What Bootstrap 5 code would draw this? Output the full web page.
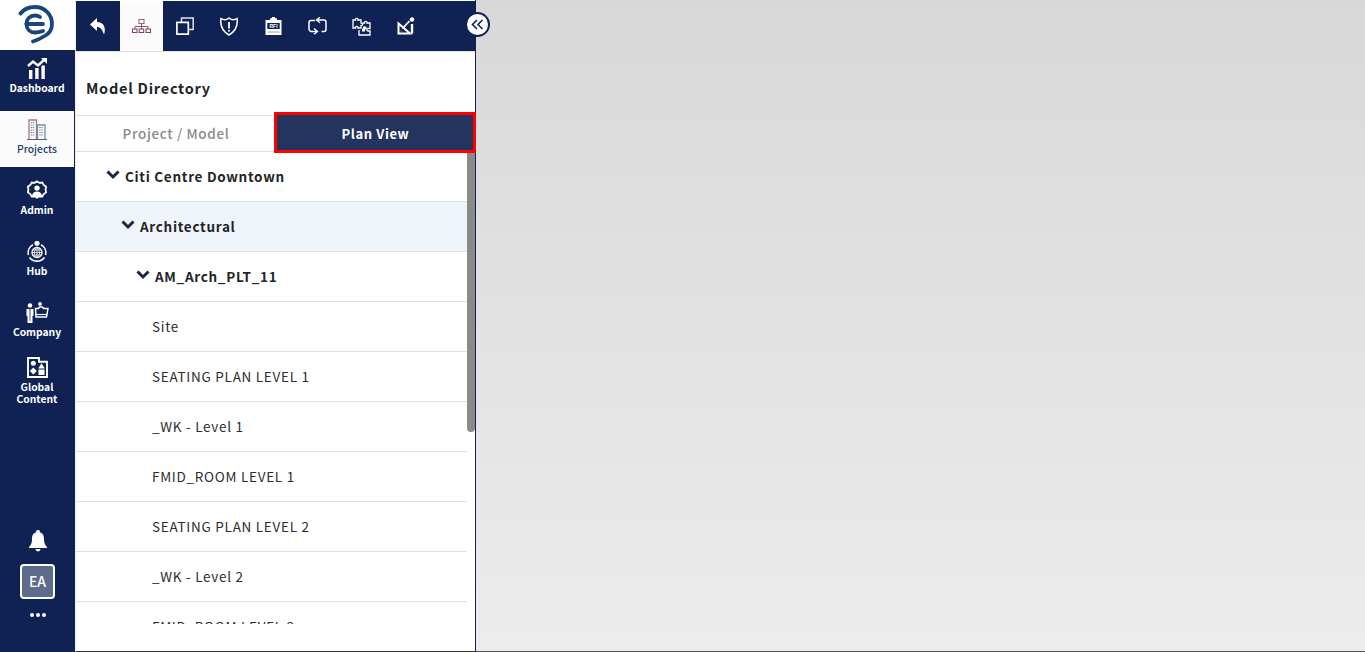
<!DOCTYPE html>
<html lang="en">
<head>
<meta charset="utf-8">
<title>Model Directory</title>
<link href="https://cdn.jsdelivr.net/npm/bootstrap@5.3.0/dist/css/bootstrap.min.css" rel="stylesheet">
<style>
html,body{height:100%;overflow:hidden}
body{font-family:"Noto Sans CJK JP","Noto Sans",sans-serif;color:#212529;background:#fff}
.app-shell{height:652px;width:1365px}
.side-rail{width:75px;background:#0f2253;flex:none}
.logo-box{height:50px;width:75px;background:#fff}
.logo-box svg{margin-right:2px}
.rail-item{display:block;width:74px;color:#fff;font-size:10.3px;font-weight:700;line-height:12px;text-align:center;height:61px;padding-top:8px}
.rail-item svg{display:block;margin:0 auto 3px}
.rail-item.active{background:#fbfbfb;color:#253a6e;font-weight:500;height:56px;margin-bottom:5px}
.rail-tall{height:auto;padding-top:2px}
.bell-wrap{height:24px;margin-bottom:11px}
.avatar{width:35px;height:35px;border:2px solid #fff;border-radius:4px;background:#5d6b8c;color:#fff;font-size:14px;font-weight:500}
.dots{height:16px;gap:2px;margin:8px 0 29px}
.dots i{display:block;width:4px;height:4px;border-radius:50%;background:#fff}
.panel{width:401px;flex:none;border-left:1px solid #f1f1f1;border-right:1px solid #0f2253;border-bottom:1px solid #333;background:#fff}
.tool-bar{height:50px;background:#0f2253;margin-top:1px;flex:none}
.tool-btn{width:44.2px;height:50px;color:#fff;flex:none}
.tool-btn.first{width:44px}
.tool-btn.on{background:#fbfbfb;width:43px}
.panel-title{height:64px;font-size:14.5px;font-weight:700;padding-left:10px;padding-top:8px;letter-spacing:.75px;color:#212529;border-top:1px solid #e0e0e0;flex:none}
.tab-row{height:37px;flex:none;border-top:1px solid #e0e0e0;border-bottom:1px solid #e0e0e0}
.tab-off{width:198px;padding-left:2px;color:#8a8a8a;font-size:13.5px;font-weight:500;letter-spacing:.65px;flex:none}
.tab-on{width:202px;height:41px;margin-top:-4px;background:#23345f;border:3px solid #f00;color:#fff;font-size:13px;font-weight:700;letter-spacing:.6px;padding:2px 0 0 1px;position:relative;z-index:1;flex:none}
.tree-wrap{height:473px;overflow:hidden}
.tree-list{width:391px;height:472px;overflow:hidden}
.tree-row{height:50px;border-bottom:1px solid #e0e0e0;font-size:13.5px;color:#2b2b33;flex:none;letter-spacing:.72px}
.tree-row.bold{font-weight:700;color:#212529;letter-spacing:.7px}
.tree-row.hl{background:#f0f4fb}
.lv0{padding-left:30px}.lv1{padding-left:45px}.lv2{padding-left:60px}.leaf{padding-left:76px}
.chev{margin-right:5px;margin-top:-3px;flex:none}
.scroll-thumb{position:absolute;right:0;top:0;width:8px;height:280px;background:#8a8a8a;border-radius:0 0 4px 4px}
.canvas-area{background:linear-gradient(#d8d8d8,#ececec);border-bottom:1px solid #555}
.toggle-btn{position:absolute;left:465px;top:12px;width:25px;height:25px;border-radius:50%;background:#fff;border:2px solid #0f2253;z-index:5}
</style>
</head>
<body>
<div class="app-shell d-flex position-relative">
  <nav class="side-rail d-flex flex-column">
    <div class="logo-box d-flex align-items-center justify-content-center">
      <svg width="38" height="40" viewBox="0 0 38 40" fill="none" stroke="#17457c" stroke-width="3.8" stroke-linecap="round"><path d="M2.500 8.500C6 4 11 2 17 2c9.500 0 17 7.500 17 17 0 5.500-2.500 9-6.500 11.500-3.500 2.200-7.500 4.300-12.500 6"/><path d="M25 19H8.500"/><path d="M8.500 19c0-5 3.500-8.500 8.500-8.500 1.500 0 3.500.5 5 1.500"/><path d="M8.500 19c0 5 3.500 8.500 8.500 8.500 2.500 0 5-.5 8-1.500"/></svg>
    </div>
    <a class="rail-item text-decoration-none">
      <svg width="20" height="21" viewBox="0 0 20 21"><path d="M1 8l5-4.500 5 4 6-5.500" fill="none" stroke="#fff" stroke-width="2.400"/><path d="M14 0h6v6z" fill="#fff"/><rect x="2" y="12" width="3.400" height="9" fill="#fff"/><rect x="8.200" y="10" width="3.400" height="11" fill="#fff"/><rect x="14.400" y="7.500" width="3.400" height="13.500" fill="#fff"/></svg>Dashboard
    </a>
    <a class="rail-item active text-decoration-none">
      <svg width="20" height="21" viewBox="0 0 20 21" fill="none"><path d="M2 20V1h7.500v19" stroke="#b9736f" stroke-width="1.300"/><path d="M10.500 20V6h7.500v14" stroke="#6a8fb5" stroke-width="1.300"/><path d="M3.800 3.500h4M3.800 6h4M3.800 8.500h4M3.800 11h4M3.800 13.500h4M3.800 16h4M12.300 8.500h4M12.300 11h4M12.300 13.500h4M12.300 16h4" stroke="#5f7fb0" stroke-width="1.100" stroke-dasharray="1.300 .7"/><path d="M0 20.500h20" stroke="#56607a" stroke-width="1"/></svg>Projects
    </a>
    <a class="rail-item text-decoration-none">
      <svg width="22" height="21" viewBox="0 0 22 22" fill="none"><path d="M11 1.500l2.500 1.500 3-.3 1.500 2.500 2.500 1.800-.5 3 .5 3-2.500 1.800-1.500 2.500-3-.3-2.500 1.500-2.500-1.500-3 .3L4 14.800 1.500 13l.5-3-.5-3L4 5.200l1.500-2.500 3 .3z" stroke="#fff" stroke-width="1.900"/><circle cx="11" cy="8.500" r="2.800" fill="#fff"/><path d="M5.800 16c1-3 3-4 5.200-4s4.200 1 5.200 4c-3 2-7.400 2-10.400 0z" fill="#fff"/></svg>Admin
    </a>
    <a class="rail-item text-decoration-none">
      <svg width="22" height="21" viewBox="0 0 22 21" fill="none" stroke="#fff"><circle cx="11" cy="11.500" r="5" stroke-width="1.300"/><path d="M6 11.500h10M11 6.500v10M7 9h8M7 14h8M11 6.500c-3.500 3-3.500 7.500 0 10M11 6.500c3.500 3 3.500 7.500 0 10" stroke-width=".8"/><path d="M7 3.800A9 9 0 0 0 2.500 14M15 3.800A9 9 0 0 1 19.500 14M3.500 16.500a9.500 9.500 0 0 0 15 0" stroke-width="1.600"/><circle cx="11" cy="2.300" r="2.200" fill="#fff"/></svg>Hub
    </a>
    <a class="rail-item text-decoration-none">
      <svg width="24" height="21" viewBox="0 0 24 21" fill="none"><circle cx="5" cy="3.500" r="2.300" fill="#fff"/><path d="M1.500 7h7v7h-1v7h-5v-7h-1z" fill="#fff"/><path d="M4.200 7h1.600l-.2 12h-1.200z" fill="#7c86a5"/><circle cx="15" cy="1.900" r="1.900" fill="#fff"/><path d="M10.500 6.500h3l1-1.500h3l1 1.500h4.500l-1.500 8.500H11z" stroke="#fff" stroke-width="1.400"/><path d="M10.500 12.500h12" stroke="#fff" stroke-width="1.200"/></svg>Company
    </a>
    <a class="rail-item text-decoration-none rail-tall">
      <svg width="21" height="21" viewBox="0 0 21 21"><path d="M1 1h11v3.800h8V20H1z" fill="none" stroke="#fff" stroke-width="1.900"/><circle cx="6.300" cy="6.300" r="2.500" fill="#fff"/><path d="M14.500 6.300l3.300 5.200h-6.600z" fill="#fff"/><path d="M6.300 10.500l3.500 3.500-3.500 3.500L2.800 14z" fill="#fff"/><rect x="11.500" y="12.500" width="6" height="5.500" fill="#fff"/></svg>Global<br>Content
    </a>
    <div class="mt-auto d-flex flex-column align-items-center">
      <svg class="bell-wrap" width="18" height="24" viewBox="0 0 18 22"><path d="M9 0a1.800 1.800 0 0 1 1.800 2.200C14 3 15 6 15 9c0 4 1 6 3 8v1H0v-1c2-2 3-4 3-8 0-3 1-6 4.200-6.800A1.800 1.800 0 0 1 9 0z" fill="#fff"/><path d="M6.500 19h5a2.500 2.500 0 0 1-5 0z" fill="#fff"/></svg>
      <div class="avatar d-flex align-items-center justify-content-center">EA</div>
      <div class="dots d-flex align-items-center justify-content-center"><i></i><i></i><i></i></div>
    </div>
  </nav>

  <section class="panel d-flex flex-column">
    <div class="tool-bar d-flex">
      <div class="tool-btn first d-flex align-items-center justify-content-center">
        <svg width="16" height="17" viewBox="0 0 16 17"><path d="M7 0L0 6.500 7 13V9c3.200 0 5.200 2.300 7 7.500C16.500 9 13 4 7 4z" fill="#fff"/></svg>
      </div>
      <div class="tool-btn on d-flex align-items-center justify-content-center">
        <svg width="19" height="14" viewBox="0 0 19 14" fill="none" stroke-width="1"><rect x="7" y=".5" width="5" height="4" stroke="#8a6a70"/><path d="M9.500 4.500v3M3 10V7.500h13V10M9.500 7.500V10" stroke="#8a5a60"/><rect x=".5" y="10" width="4.500" height="3.500" stroke="#80405a"/><rect x="7.200" y="10" width="4.500" height="3.500" stroke="#80405a"/><rect x="14" y="10" width="4.500" height="3.500" stroke="#80405a"/></svg>
      </div>
      <div class="tool-btn d-flex align-items-center justify-content-center">
        <svg width="18" height="18" viewBox="0 0 18 18" fill="none"><path d="M5.500 5V1h11.700v11.500H13" stroke="#dfe2ea" stroke-width="1.500"/><rect x=".9" y="5.400" width="11.400" height="11.700" stroke="#fff" stroke-width="1.700"/></svg>
      </div>
      <div class="tool-btn d-flex align-items-center justify-content-center">
        <svg width="18" height="19" viewBox="0 0 18 19" fill="none"><path d="M1 1.500C4 3.500 6 3.500 9 1c3 2.500 5 2.500 8 .5 1 6.500-1 12.500-8 16.500C2 14 0 8 1 1.500z" stroke="#fff" stroke-width="1.500"/><path d="M9 5v6.500" stroke="#fff" stroke-width="1.800"/><circle cx="9" cy="13.800" r="1" fill="#fff"/></svg>
      </div>
      <div class="tool-btn d-flex align-items-center justify-content-center">
        <svg width="17" height="18" viewBox="0 0 17 18"><path d="M.5 3h4.500V1.500L7 1V0h3v1l2 .5V3h4.500v15H.5z" fill="#fff"/><rect x="2.300" y="6" width="12.400" height="6" fill="#0f2253"/><text x="8.500" y="11" font-size="5" font-weight="700" fill="#fff" text-anchor="middle" font-family="Liberation Sans,sans-serif">RFI</text><path d="M2.500 15h12" stroke="#9aa3bb" stroke-width="1"/></svg>
      </div>
      <div class="tool-btn d-flex align-items-center justify-content-center">
        <svg width="19" height="18" viewBox="0 0 19 18" fill="none" stroke="#fff" stroke-width="1.500"><path d="M7 3.500H3Q1 3.500 1 5.500V12Q1 14 3 14.500H9"/><path d="M13.500 14.500H16Q18 14.500 18 12.500V5Q18 3 16 3H9"/><path d="M12 .3L8.500 3 12 5.800M6 11.500l3.500 3-3.500 2.800" stroke-width="1.400"/></svg>
      </div>
      <div class="tool-btn d-flex align-items-center justify-content-center">
        <svg width="19" height="19" viewBox="0 0 19 19" fill="none" stroke="#fff" stroke-width="1.300"><path d="M1 3h2.500a1.300 1.300 0 1 1 2.500 0H9v3a1.300 1.300 0 1 1 0 2.500V11H6a1.300 1.300 0 1 0-2.500 0H1z"/><path d="M10.500 6h2a1.300 1.300 0 1 1 2.500 0H18v5.500h-1.500a1.300 1.300 0 1 0 0 2.500H18v4H7v-5"/><path d="M11 9.500h3.500v3H13v2h-3v-3h1z" fill="#fff" stroke="none"/></svg>
      </div>
      <div class="tool-btn d-flex align-items-center justify-content-center">
        <svg width="18" height="18" viewBox="0 0 18 18" fill="none"><path d="M1.500 6.500v10H13z" stroke="#fff" stroke-width="2"/><path d="M3.500 12v3h3z" fill="#8a2f4d"/><path d="M5.500 11.500l7-7.500" stroke="#fff" stroke-width="1.800"/><circle cx="15" cy="2.500" r="2.200" fill="#fff"/><path d="M15 7v9.500" stroke="#fff" stroke-width="2.400"/></svg>
      </div>
    </div>
    <div class="panel-title d-flex align-items-center">Model Directory</div>
    <div class="tab-row d-flex">
      <div class="tab-off d-flex align-items-center justify-content-center">Project / Model</div>
      <div class="tab-on d-flex align-items-center justify-content-center">Plan View</div>
    </div>
    <div class="tree-wrap position-relative">
      <div class="scroll-thumb"></div>
      <div class="tree-list d-flex flex-column">
        <div class="tree-row bold lv0 d-flex align-items-center"><svg class="chev" width="14" height="10" viewBox="0 0 14 10"><path d="M1.500 1.500l5.500 5.500 5.500-5.500" fill="none" stroke="#1c2541" stroke-width="3"/></svg>Citi Centre Downtown</div>
        <div class="tree-row bold hl lv1 d-flex align-items-center"><svg class="chev" width="14" height="10" viewBox="0 0 14 10"><path d="M1.500 1.500l5.500 5.500 5.500-5.500" fill="none" stroke="#1c2541" stroke-width="3"/></svg>Architectural</div>
        <div class="tree-row bold lv2 d-flex align-items-center"><svg class="chev" width="14" height="10" viewBox="0 0 14 10"><path d="M1.500 1.500l5.500 5.500 5.500-5.500" fill="none" stroke="#1c2541" stroke-width="3"/></svg>AM_Arch_PLT_11</div>
        <div class="tree-row leaf d-flex align-items-center">Site</div>
        <div class="tree-row leaf d-flex align-items-center">SEATING PLAN LEVEL 1</div>
        <div class="tree-row leaf d-flex align-items-center">_WK - Level 1</div>
        <div class="tree-row leaf d-flex align-items-center">FMID_ROOM LEVEL 1</div>
        <div class="tree-row leaf d-flex align-items-center">SEATING PLAN LEVEL 2</div>
        <div class="tree-row leaf d-flex align-items-center">_WK - Level 2</div>
        <div class="tree-row leaf d-flex align-items-center">FMID_ROOM LEVEL 2</div>
      </div>
    </div>
  </section>

  <main class="canvas-area flex-grow-1"></main>
  <button class="toggle-btn d-flex align-items-center justify-content-center p-0" type="button" aria-label="Collapse">
    <svg width="13" height="11" viewBox="0 0 13 11" fill="none" stroke="#0f2253" stroke-width="1.600"><path d="M6 1L1.500 5.500 6 10M11.500 1L7 5.500 11.500 10"/></svg>
  </button>
</div>
</body>
</html>
